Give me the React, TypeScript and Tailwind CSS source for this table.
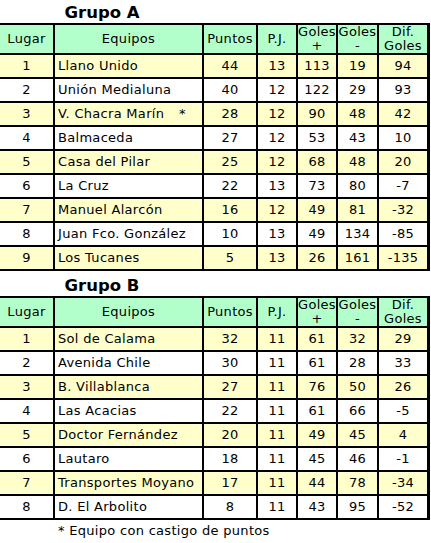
import React from "react";

type Row = [number, string, number, number, number, number, number, boolean?];

const grupoA: Row[] = [
  [1, "Llano Unido", 44, 13, 113, 19, 94],
  [2, "Unión Medialuna", 40, 12, 122, 29, 93],
  [3, "V. Chacra Marín", 28, 12, 90, 48, 42, true],
  [4, "Balmaceda", 27, 12, 53, 43, 10],
  [5, "Casa del Pilar", 25, 12, 68, 48, 20],
  [6, "La Cruz", 22, 13, 73, 80, -7],
  [7, "Manuel Alarcón", 16, 12, 49, 81, -32],
  [8, "Juan Fco. González", 10, 13, 49, 134, -85],
  [9, "Los Tucanes", 5, 13, 26, 161, -135],
];

const grupoB: Row[] = [
  [1, "Sol de Calama", 32, 11, 61, 32, 29],
  [2, "Avenida Chile", 30, 11, 61, 28, 33],
  [3, "B. Villablanca", 27, 11, 76, 50, 26],
  [4, "Las Acacias", 22, 11, 61, 66, -5],
  [5, "Doctor Fernández", 20, 11, 49, 45, 4],
  [6, "Lautaro", 18, 11, 45, 46, -1],
  [7, "Transportes Moyano", 17, 11, 44, 78, -34],
  [8, "D. El Arbolito", 8, 11, 43, 95, -52],
];

const cols = "grid grid-cols-[55px_149px_54px_40px_40px_41px_48px]";

function Table({ title, rows }: { title: string; rows: Row[] }) {
  return (
    <div>
      <div className="w-[204px] text-center font-bold text-[16.5px] tracking-normal leading-[20px] h-[23px] pt-[3px]">{title}</div>
      <div className="w-[430px] border-t-2 border-b-2 border-r-[3px] border-black">
        <div className={`${cols} bg-[#b3ffcc] h-[30px] border-b-2 border-black text-center leading-[14px]`}>
          <div className="border-r-2 border-black flex items-center justify-center">Lugar</div>
          <div className="border-r-2 border-black flex items-center justify-center">Equipos</div>
          <div className="border-r-2 border-black flex items-center justify-center">Puntos</div>
          <div className="border-r-2 border-black flex items-center justify-center">P.J.</div>
          <div className="border-r-2 border-black flex flex-col items-center justify-center"><span>Goles</span><span>+</span></div>
          <div className="border-r-2 border-black flex flex-col items-center justify-center"><span>Goles</span><span>-</span></div>
          <div className="flex flex-col items-center justify-center"><span>Dif.</span><span>Goles</span></div>
        </div>
        {rows.map((r, i) => (
          <div
            key={i}
            className={`${cols} ${i % 2 === 0 ? "bg-[#ffffcc]" : "bg-white"} ${i < rows.length - 1 ? "h-[24px] border-b-2 border-black" : "h-[22px]"}`}
          >
            <div className="border-r-2 border-black flex items-center justify-center">{r[0]}</div>
            <div className="border-r-2 border-black flex items-center pl-[3px] relative">
              {r[1]}
              {r[7] && <span className="absolute left-[124px]">*</span>}
            </div>
            <div className="border-r-2 border-black flex items-center justify-center">{r[2]}</div>
            <div className="border-r-2 border-black flex items-center justify-center">{r[3]}</div>
            <div className="border-r-2 border-black flex items-center justify-center">{r[4]}</div>
            <div className="border-r-2 border-black flex items-center justify-center">{r[5]}</div>
            <div className="flex items-center justify-center">{r[6] < 0 ? "-" + Math.abs(r[6]) : r[6]}</div>
          </div>
        ))}
      </div>
    </div>
  );
}

export default function App() {
  return (
    <div className="w-[431px] h-[543px] bg-white text-black text-[13px] tracking-[0.3px]" style={{ fontFamily: '"DejaVu Sans", Verdana, sans-serif' }}>
      <Table title="Grupo A" rows={grupoA} />
      <div className="h-[2px]" />
      <Table title="Grupo B" rows={grupoB} />
      <div className="pl-[58px] pt-[3px] leading-[16px]">* Equipo con castigo de puntos</div>
    </div>
  );
}
